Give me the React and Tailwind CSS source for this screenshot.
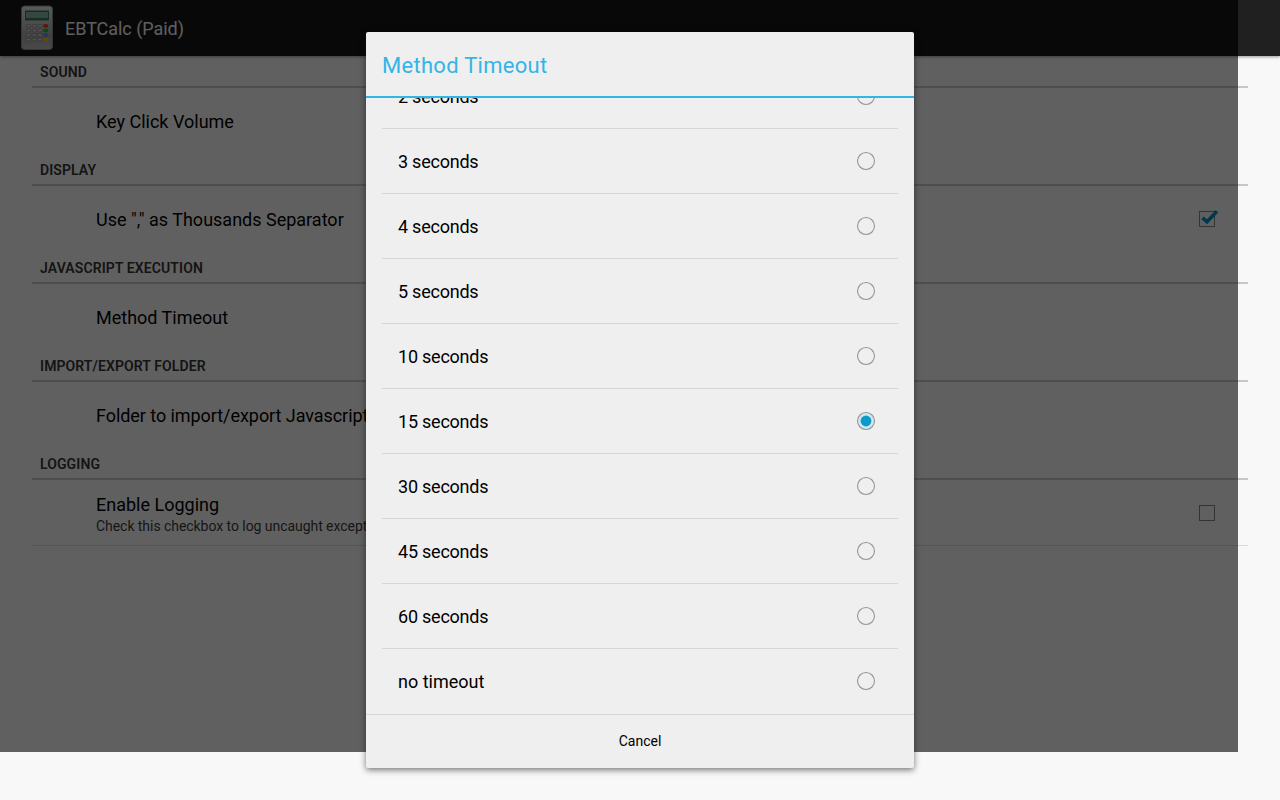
import React from "react";

const sections = [
  { title: "SOUND", item: "Key Click Volume" },
  { title: "DISPLAY", item: 'Use "," as Thousands Separator', box: true, checked: true },
  { title: "JAVASCRIPT EXECUTION", item: "Method Timeout" },
  { title: "IMPORT/EXPORT FOLDER", item: "Folder to import/export Javascript", tight: true },
  {
    title: "LOGGING",
    item: "Enable Logging",
    summary: "Check this checkbox to log uncaught exceptions",
    box: true,
  },
];

const options = [
  "2 seconds",
  "3 seconds",
  "4 seconds",
  "5 seconds",
  "10 seconds",
  "15 seconds",
  "30 seconds",
  "45 seconds",
  "60 seconds",
  "no timeout",
];

function CalcIcon() {
  const columns = [0, 1, 2];
  const accents = ["#ff2a24", "#20c020", "#4c90ff", "#ffb818"];
  return (
    <svg width="34" height="46" viewBox="0 0 34 46" className="shrink-0">
      <defs>
        <linearGradient id="body" x1="0" y1="0" x2="0" y2="1">
          <stop offset="0" stopColor="#e6e6e6" />
          <stop offset="0.35" stopColor="#c8c8c8" />
          <stop offset="0.7" stopColor="#a8a8a8" />
          <stop offset="1" stopColor="#bcbcbc" />
        </linearGradient>
      </defs>
      <rect x="1.500" y="1" width="31" height="43.500" rx="3" fill="url(#body)" stroke="#8a8a8a" />
      <rect x="5" y="5.500" width="24" height="10" fill="#35795f" />
      <rect x="6" y="7" width="22" height="6" fill="#86b8a6" />
      {accents.map((accent, row) => (
        <g key={accent}>
          {columns.map((col) => (
            <ellipse
              key={col}
              cx={8.6 + col * 5.7}
              cy={20.8 + row * 4.6}
              rx="2.200"
              ry="1.500"
              fill="#d8d8d8"
              stroke="#7c7c7c"
              strokeWidth="0.700"
            />
          ))}
          <ellipse cx="25.700" cy={20.8 + row * 4.6} rx="2.700" ry="1.900" fill={accent} />
        </g>
      ))}
    </svg>
  );
}

function Checkbox({ checked }) {
  return (
    <svg width="24" height="24" viewBox="0 0 24 24" className="mr-px shrink-0">
      <rect x="4.500" y="4.500" width="15" height="15" fill="none" stroke="#858a85" strokeWidth="1" />
      {checked && <path d="M7.500 10.800 L12 14.700 L22 4.200" fill="none" stroke="#0094c0" strokeWidth="3.600" />}
    </svg>
  );
}

function Radio({ selected }) {
  return (
    <svg width="20" height="20" viewBox="0 0 20 20" className="shrink-0">
      <circle cx="10" cy="10" r="8.500" fill={selected ? "#cfe8f2" : "none"} stroke="#969696" strokeWidth="1.100" />
      {selected && <circle cx="10" cy="10" r="5.400" fill="#0c99cc" />}
    </svg>
  );
}

export default function App() {
  return (
    <div className="relative h-[800px] w-[1280px] overflow-hidden bg-[#f8f8f8] font-[Roboto,sans-serif] text-black">
      <header className="flex h-14 items-center bg-[linear-gradient(to_right,#151515_1238px,#202020_1238px)] pl-5 shadow-[0_1px_3px_rgba(0,0,0,0.4)]">
        <CalcIcon />
        <h1 className="ml-[11px] pt-px text-[18px] tracking-[-0.04px] text-[#f4f4f4]">EBTCalc (Paid)</h1>
      </header>
      <main className="px-8">
        {sections.map((section, index) => (
          <section key={section.title}>
            <h2 className="flex h-8 items-center border-b-2 border-[#c6c8c6] pl-2 pt-0.5 text-[14px] font-semibold leading-4 tracking-[0.1px] text-[#353535]">
              {section.title}
            </h2>
            <div
              className={
                "flex h-[66px] items-center justify-between pl-16 pr-7 " +
                (index === sections.length - 1 ? "border-b border-[#d9d9d9]" : "")
              }
            >
              <div className="pt-0.5">
                <p
                  className={
                    "whitespace-nowrap text-[18px] leading-6 " + (section.tight ? "tracking-[-0.06px]" : "tracking-normal")
                  }
                >
                  {section.item}
                </p>
                {section.summary && (
                  <p className="whitespace-nowrap text-[14px] leading-[18px] tracking-[-0.05px] text-[#3a3a3a]">
                    {section.summary}
                  </p>
                )}
              </div>
              {section.box && <Checkbox checked={section.checked} />}
            </div>
          </section>
        ))}
      </main>

      <div className="absolute left-0 top-0 h-[752px] w-[1238px] bg-black/61" />

      <div
        role="dialog"
        className="absolute left-[366px] top-8 flex h-[736px] w-[548px] flex-col overflow-hidden rounded-[2px] bg-[#efefef] shadow-[0_2px_6px_rgba(0,12,0,0.55)]"
      >
        <h2 className="flex h-[66px] shrink-0 items-center border-b-2 border-[#33b5e5] px-4 pt-0.5 text-[22px] tracking-[0.28px] text-[#33b5e5]">
          Method Timeout
        </h2>
        <div className="flex h-[616px] shrink-0 flex-col justify-end overflow-hidden px-4">
          {options.map((option) => (
            <div
              key={option}
              className="flex h-[65px] shrink-0 items-center justify-between border-b border-[#d6d6d6] pl-4 pr-[22px] last:border-transparent last:tracking-normal tracking-[-0.23px]"
            >
              <span className="text-[18px]">{option}</span>
              <Radio selected={option === "15 seconds"} />
            </div>
          ))}
        </div>
        <button className="flex-1 border-t border-[#d6d6d6] text-[14px]">Cancel</button>
      </div>
    </div>
  );
}
